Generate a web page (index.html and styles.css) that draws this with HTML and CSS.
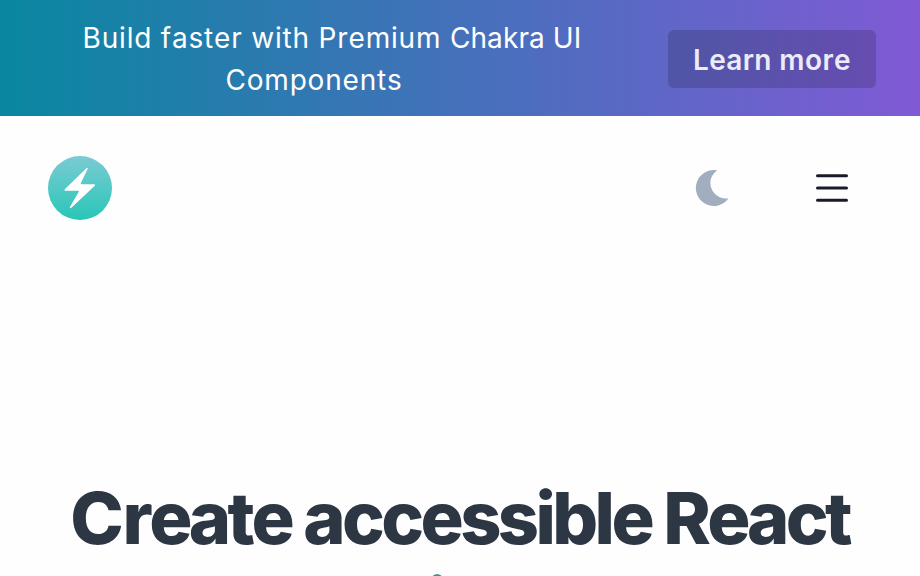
FILE: index.html
```html
<!DOCTYPE html>
<html lang="en">
<head>
<meta charset="utf-8">
<title>Chakra UI</title>
<link rel="stylesheet" href="styles.css">
</head>
<body>
<div class="banner">
  <p class="banner-text">Build faster with Premium <span class="brand">Chakra UI</span> Components</p>
  <a class="banner-link">Learn more</a>
</div>
<header class="header">
  <svg class="logo" viewBox="0 0 64 64">
    <defs><linearGradient id="g" x1="0" y1="0" x2="0" y2="1"><stop offset="0" stop-color="#7bcbd4"/><stop offset="1" stop-color="#29c6b7"/></linearGradient></defs>
    <circle cx="32" cy="32" r="32" fill="url(#g)"/>
    <path d="M38.400 12.200 16.800 33.300c-.6.6-.2 1.400.5 1.400h12.800c.6 0 .9.500.700 1L21.900 51c-.4.8.6 1.500 1.200.9L46.800 29.700c.5-.5.2-1.400-.5-1.400H33.500c-.6 0-.9-.5-.7-1L39.600 13c.4-.8-.6-1.400-1.200-.8z" fill="#fff"/>
  </svg>
  <div class="actions">
    <svg class="moon" viewBox="0 0 40 40"><path d="M25.200 2.300A18 18 0 1 0 36.600 30.300C21 32.500 11 13 25.200 2.300z"/></svg>
    <svg class="menu" viewBox="0 0 32 32"><path d="M1.500 3.800h29M1.500 16h29M1.500 28.200h29"/></svg>
  </div>
</header>
<main class="hero">
  <h1>Create accessible React <span>apps with speed</span></h1>
</main>
</body>
</html>
```
FILE: styles.css
```css
body { margin: 0; height: 576px; overflow: hidden; background: #fefefe; font-family: Inter, sans-serif; font-kerning: none; color: #2d3748; }
.banner { display: flex; align-items: center; justify-content: space-between; box-sizing: border-box; height: 116px; padding: 2px 44px 0; background: linear-gradient(to right, #0987a0, #805ad5); color: #fff; }
.banner-text { width: 540px; margin: 0; text-align: center; text-indent: 36px; font-size: 28px; line-height: 42px; font-weight: 400; letter-spacing: .8px; }
.brand { letter-spacing: .1px; }
.banner-link { box-sizing: border-box; width: 208px; height: 58px; border-radius: 6px; background: rgba(0,0,0,.16); color: #ebebfa; text-align: center; font-size: 28px; line-height: 60px; font-weight: 600; letter-spacing: .45px; }
.header { display: flex; align-items: center; justify-content: space-between; height: 144px; padding: 0 72px 0 48px; }
.logo { width: 64px; height: 64px; }
.actions { display: flex; align-items: center; gap: 84px; }
.moon { width: 40px; height: 40px; fill: #a0aec0; }
.menu { width: 32px; height: 32px; fill: none; stroke: #171c26; stroke-width: 3; stroke-linecap: round; }
.hero { padding-top: 215px; text-align: center; }
h1 { margin: 0; font-size: 72px; line-height: 86px; font-weight: 800; letter-spacing: -3.600px; text-indent: -1px; color: #2d3643; }
h1::first-letter { letter-spacing: -1.200px; }
h1 span { display: block; color: #319795; }
```
